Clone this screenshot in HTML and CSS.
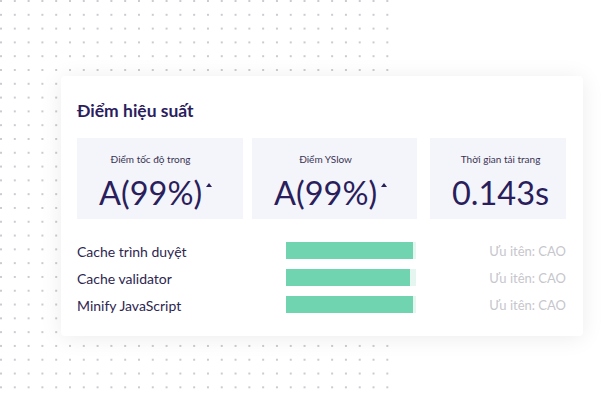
FILE: index.html
```html
<!DOCTYPE html>
<html lang="vi">
<head>
<meta charset="UTF-8">
<meta name="viewport" content="width=device-width, initial-scale=1.0">
<title>Điểm hiệu suất</title>
<link rel="stylesheet" href="styles.css">
</head>
<body>
<div class="page">
  <section class="card">
    <h2 class="card-title">Điểm hiệu suất</h2>

    <div class="stats">
      <div class="stat stat-wide">
        <div class="stat-inner">
          <p class="stat-label">Điểm tốc độ trong</p>
          <span class="stat-value up">A(99%)</span>
        </div>
      </div>
      <div class="stat stat-mid">
        <div class="stat-inner">
          <p class="stat-label">Điểm YSlow</p>
          <span class="stat-value up">A(99%)</span>
        </div>
      </div>
      <div class="stat stat-narrow">
        <div class="stat-inner">
          <p class="stat-label">Thời gian tải trang</p>
          <span class="stat-value">0.143s</span>
        </div>
      </div>
    </div>

    <ul class="checks">
      <li class="check">
        <span class="check-name">Cache trình duyệt</span>
        <span class="bar"><span class="bar-fill" style="width: 98%"></span></span>
        <span class="check-priority">Ưu itên: CAO</span>
      </li>
      <li class="check">
        <span class="check-name">Cache validator</span>
        <span class="bar"><span class="bar-fill" style="width: 95%"></span></span>
        <span class="check-priority">Ưu itên: CAO</span>
      </li>
      <li class="check">
        <span class="check-name">Minify JavaScript</span>
        <span class="bar"><span class="bar-fill" style="width: 98%"></span></span>
        <span class="check-priority">Ưu itên: CAO</span>
      </li>
    </ul>
  </section>
</div>
</body>
</html>
```

FILE: styles.css
```css
body {
  margin: 0;
  font-family: Lato, "Noto Sans", sans-serif;
  color: #2b1f5c;
  background-color: #fff;
}

/* dotted field on the left, plain white past it */
.page {
  min-height: 400px;
  padding: 76px 0 0 61px;
  box-sizing: border-box;
  background-image:
    linear-gradient(to right, transparent 394px, #fff 394px),
    radial-gradient(circle, #cacad0 0.9px, transparent 1.4px);
  background-size: 100% 100%, 13.8px 13.8px;
  background-position: 0 0, -5.9px -5.9px;
}

.card {
  width: 522px;
  box-sizing: border-box;
  padding: 24px 17px 17px 16px;
  border-radius: 4px;
  background-color: #fff;
  box-shadow: 0 2px 22px rgba(0, 0, 0, 0.08);
}

.card-title {
  margin: 0 0 16px;
  font-size: 17.5px;
  line-height: 22px;
  font-weight: 700;
  color: #2c1d5e;
}

.stats {
  display: flex;
  gap: 9px;
}
.stat {
  box-sizing: border-box;
  padding: 15px 0 8px 22px;
  background-color: #f4f5fa;
}
.stat-wide { width: 166px; }
.stat-mid { width: 165px; }
.stat-narrow { width: 136px; margin-left: auto; }

.stat-inner {
  display: inline-block;
  text-align: center;
}
.stat-label {
  margin: 0 0 10px;
  font-size: 10px;
  line-height: 12px;
  color: #3a3454;
}
.stat-value {
  position: relative;
  display: inline-block;
  font-size: 32.5px;
  line-height: 36px;
  color: #2a1e5c;
}
/* small trend caret next to the score */
.stat-value.up::after {
  content: '';
  position: absolute;
  left: calc(100% + 4px);
  top: 8px;
  border-left: 3.5px solid transparent;
  border-right: 3.5px solid transparent;
  border-bottom: 4.5px solid #2a1e5c;
}

.checks {
  list-style: none;
  margin: 19px 0 0;
  padding: 0;
}
.check {
  display: grid;
  grid-template-columns: 209px 130px 1fr;
  align-items: center;
  height: 27px;
  font-size: 14px;
  line-height: 27px;
}
.check-name {
  color: #2d2650;
}
.bar {
  display: block;
  height: 17px;
  margin-bottom: 3px;
  background-color: #e4f6ef;
}
.bar-fill {
  display: block;
  height: 100%;
  background-color: #71d4b1;
}
.check-priority {
  text-align: right;
  font-size: 13px;
  color: #c6c6cc;
}
```
